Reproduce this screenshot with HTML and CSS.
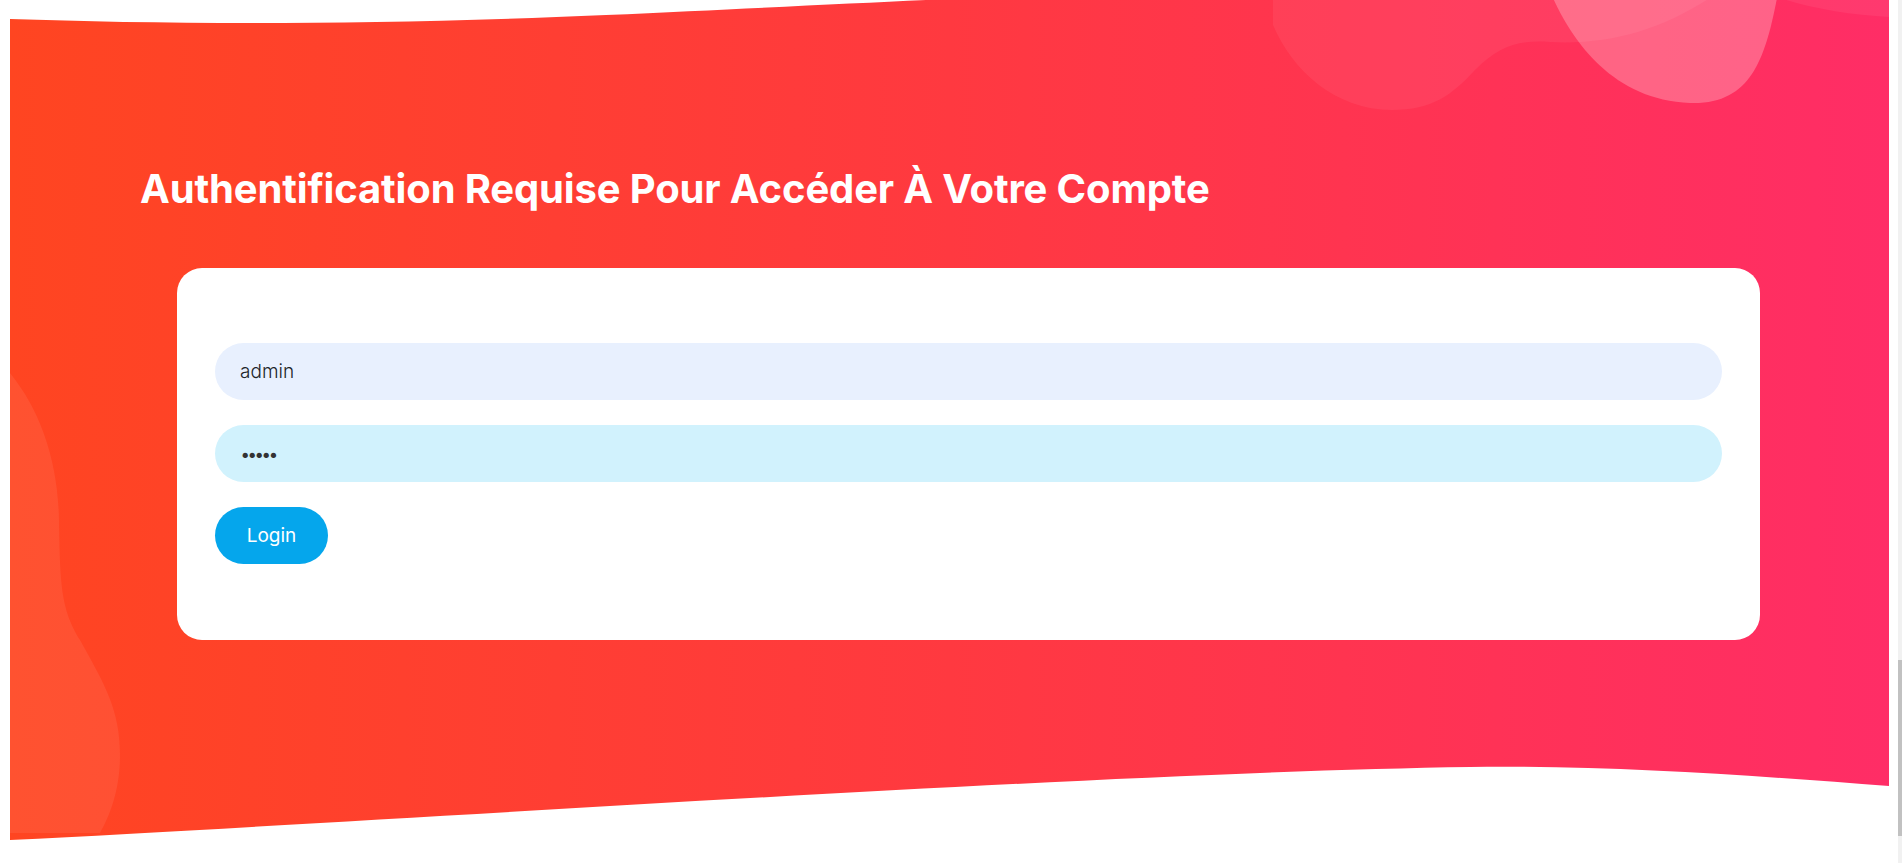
FILE: index.html
```html
<!DOCTYPE html>
<html lang="fr">
<head>
<meta charset="utf-8">
<title>Authentification</title>
<link rel="stylesheet" href="styles.css">
</head>
<body>
<section class="hero">
  <svg class="hero-bg" width="1879" height="863" viewBox="0 0 1879 863" aria-hidden="true">
    <defs>
      <linearGradient id="heroGrad" x1="0" y1="0" x2="1" y2="0">
        <stop offset="0" stop-color="#ff4521"/>
        <stop offset="0.5" stop-color="#ff3940"/>
        <stop offset="1" stop-color="#ff2d66"/>
      </linearGradient>
    </defs>
    <path fill="url(#heroGrad)" d="M0,19 C150,24 350,26 596,15 C750,8 870,2 960,-2 L1879,-2 L1879,786 C1750,776 1600,765 1460,767 C1100,772 400,820 0,840 Z"/>
    <path fill="#ffffff" fill-opacity="0.06" d="M1263,-2 L1263,25 C1282,70 1325,110 1382,110 C1422,110 1442,95 1465,70 C1490,45 1510,40 1540,42 C1600,45 1650,30 1700,-2 Z"/>
    <path fill="#ffffff" fill-opacity="0.06" d="M1770,-2 C1800,8 1840,15 1879,17 L1879,-2 Z"/>
    <path fill="#ffffff" fill-opacity="0.25" d="M1543,-2 C1562,40 1602,100 1680,103 C1740,105 1755,60 1767,-2 Z"/>
    <path fill="#ffffff" fill-opacity="0.07" d="M0,373 C30,410 48,460 49,520 C50,590 52,610 70,640 C95,685 110,710 110,755 C110,790 100,815 90,833 L0,833 Z"/>
  </svg>
  <div class="hero-inner">
    <h1 class="title">Authentification Requise Pour Accéder À Votre Compte</h1>
    <form class="card" action="#" onsubmit="return false">
      <input class="field field-user" type="text" name="username" value="admin" autocomplete="off">
      <input class="field field-pass" type="password" name="password" value="admin" autocomplete="off">
      <button class="btn" type="submit">Login</button>
    </form>
  </div>
</section>
<div class="scrollbar" aria-hidden="true"><div class="scrollbar-thumb"></div></div>
</body>
</html>
```
FILE: styles.css
```css
html, body {
  margin: 0;
  padding: 0;
  height: 863px;
  overflow: hidden;
  background: #ffffff;
  font-family: Inter, "Noto Sans", sans-serif;
}

.hero {
  position: relative;
  margin-left: 10px;
  width: 1879px;
  height: 863px;
}

.hero-bg {
  position: absolute;
  left: 0;
  top: 0;
  display: block;
}

.hero-inner {
  position: relative;
  display: flex;
  flex-direction: column;
  padding-top: 165px;
}

.title {
  margin: 0 0 55px 130px;
  font-family: Inter, sans-serif;
  font-size: 40px;
  font-weight: 700;
  line-height: 48px;
  letter-spacing: -0.15px;
  color: #ffffff;
  white-space: nowrap;
}

.card {
  margin: 0 0 0 167px;
  width: 1583px;
  box-sizing: border-box;
  padding: 75px 38px 76px;
  background: #ffffff;
  border-radius: 25px;
  display: flex;
  flex-direction: column;
  align-items: flex-start;
  gap: 25px;
}

.field {
  box-sizing: border-box;
  width: 100%;
  height: 57px;
  border: 0;
  outline: none;
  border-radius: 29px;
  padding: 0 25px;
  font-family: Inter, sans-serif;
  font-size: 19px;
  font-weight: 300;
  color: #212529;
}

.field-user {
  background: #e8f0fe;
}

.field-pass {
  background: #d1f2fd;
  font-family: Lato, sans-serif;
  font-size: 18px;
  letter-spacing: -3.4px;
  color: #333333;
}

.btn {
  width: 113px;
  height: 57px;
  border: 0;
  border-radius: 29px;
  background: #05a6ec;
  color: #ffffff;
  font-family: Inter, sans-serif;
  font-size: 19px;
  font-weight: 400;
  cursor: pointer;
  padding: 0;
}

.scrollbar {
  position: fixed;
  top: 0;
  right: 0;
  width: 4px;
  height: 863px;
  background: #f1f1f1;
}

.scrollbar-thumb {
  position: absolute;
  left: 0;
  top: 660px;
  width: 4px;
  height: 176px;
  background: #c1c1c1;
}
```
